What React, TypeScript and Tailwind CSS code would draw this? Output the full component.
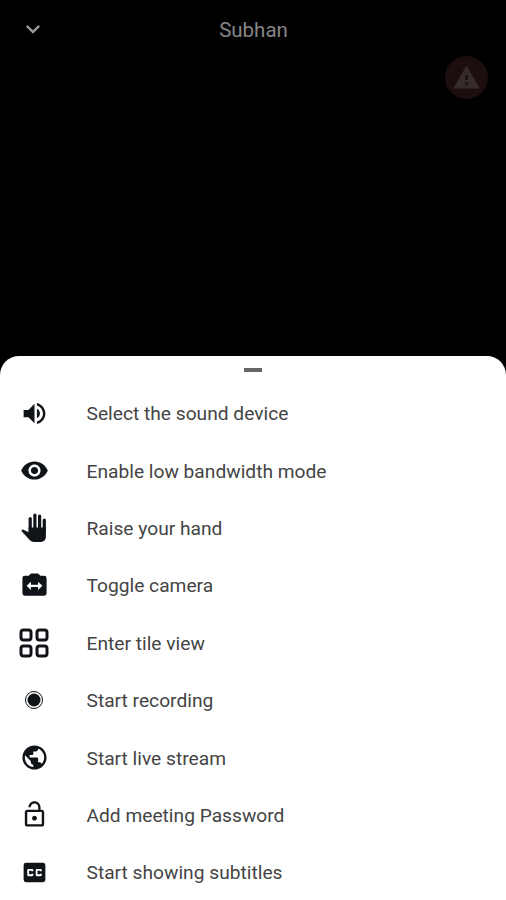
import type { ReactNode } from "react";
import {
  MdClosedCaption,
  MdKeyboardArrowDown,
  MdLockOpen,
  MdPublic,
  MdVisibility,
  MdVolumeUp,
  MdWarning,
} from "react-icons/md";

function HandIcon() {
  return (
    <svg width="26" height="29" viewBox="0 0 26 29" fill="currentColor">
      <g fill="none" stroke="currentColor" strokeWidth="3.200" strokeLinecap="round">
        <path d="M9.200 18V5.500" />
        <path d="M13.900 16V2" />
        <path d="M18.600 16V3.200" />
        <path d="M23.300 18V7" />
      </g>
      <path d="M7.600 14.500h17.300v9.500a5 5 0 0 1-5 5h-7.200a5 5 0 0 1-3.500-1.500L.8 18.600c-.8-1 .4-2.400 1.700-1.900l5.100 2.500Z" />
    </svg>
  );
}

function CameraIcon() {
  return (
    <svg width="29" height="29" viewBox="0 0 24 24" fill="currentColor">
      <path
        fillRule="evenodd"
        d="M9 2 7.200 4H4a2 2 0 0 0-2 2v12.500a2 2 0 0 0 2 2h16a2 2 0 0 0 2-2V6a2 2 0 0 0-2-2h-3.200L15 2Zm0 6.800v2.500h6V8.800l3.500 3.500-3.500 3.500v-2.500H9v2.500L5.500 12.300Z"
      />
    </svg>
  );
}

function TileIcon() {
  return (
    <svg
      width="30"
      height="30"
      viewBox="0 0 30 30"
      fill="none"
      stroke="currentColor"
      strokeWidth="3"
    >
      <rect x="2" y="2" width="10" height="10" rx="2.5" />
      <rect x="18" y="2" width="10" height="10" rx="2.5" />
      <rect x="2" y="18" width="10" height="10" rx="2.5" />
      <rect x="18" y="18" width="10" height="10" rx="2.5" />
    </svg>
  );
}

function RecordIcon() {
  return (
    <svg width="20" height="20" viewBox="0 0 20 20">
      <circle cx="10" cy="10" r="8.5" fill="none" stroke="currentColor" strokeWidth="1" />
      <circle cx="10" cy="10" r="6.5" fill="currentColor" />
    </svg>
  );
}

const items: { label: string; icon: ReactNode }[] = [
  { label: "Select the sound device", icon: <MdVolumeUp size={29} /> },
  { label: "Enable low bandwidth mode", icon: <MdVisibility size={29} /> },
  { label: "Raise your hand", icon: <HandIcon /> },
  { label: "Toggle camera", icon: <CameraIcon /> },
  { label: "Enter tile view", icon: <TileIcon /> },
  { label: "Start recording", icon: <RecordIcon /> },
  { label: "Start live stream", icon: <MdPublic size={29} /> },
  { label: "Add meeting Password", icon: <MdLockOpen size={29} /> },
  { label: "Start showing subtitles", icon: <MdClosedCaption size={29} /> },
];

export default function App() {
  return (
    <div className="flex h-[900px] w-[506px] flex-col overflow-hidden bg-black font-['Roboto',sans-serif]">
      <header className="grid h-[56px] shrink-0 grid-cols-[66px_1fr_66px] items-center pt-[2px]">
        <button className="flex justify-center text-[#999999]" aria-label="Minimize">
          <MdKeyboardArrowDown size={28} />
        </button>
        <h1 className="pl-px pt-px text-center text-[20.5px] leading-6 text-[#858585]">
          Subhan
        </h1>
      </header>

      <div className="flex h-[300px] shrink-0 justify-end pr-[18px]">
        <div className="flex size-[43px] items-center justify-center rounded-full bg-[#1c0e0e] text-[#352b2b]">
          <MdWarning size={29} />
        </div>
      </div>

      {/* Bottom sheet */}
      <div className="flex flex-1 flex-col rounded-t-[19px] bg-white">
        <div className="flex h-[28px] shrink-0 justify-center pt-[12px]">
          <div className="h-[4px] w-[18px] bg-[#666666]" />
        </div>
        <ul>
          {items.map((item) => (
            <li key={item.label} className="flex h-[57.4px] items-center">
              <span className="flex w-[68px] shrink-0 justify-center pt-px text-[#101418]">
                {item.icon}
              </span>
              <span className="ml-[18.5px] pt-[3px] text-[19.2px] leading-6 text-[#444444]">
                {item.label}
              </span>
            </li>
          ))}
        </ul>
      </div>
    </div>
  );
}
